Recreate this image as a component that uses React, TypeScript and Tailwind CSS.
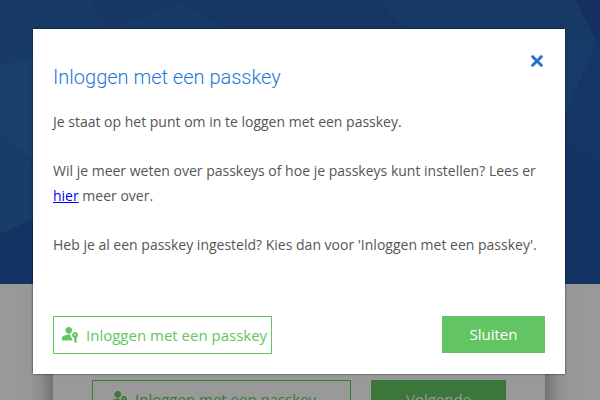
import React from "react";

const PasskeyIcon = () => (
  <svg viewBox="3 4 19 19" className="w-4 h-4 shrink-0" fill="currentColor" aria-hidden="true">
    <path d="M3 20v-2.8q0-.85.438-1.562T4.6 14.55q1.55-.775 3.15-1.162T11 13q.5 0 1 .038t1 .112q-.1 1.45.525 2.738T15.35 18v2H3Zm16 3l-1.5-1.5v-4.65q-1.1-.325-1.8-1.237T15 13.5q0-1.45 1.025-2.475T18.5 10q1.45 0 2.475 1.025T22 13.5q0 1.125-.638 2t-1.612 1.25L21 18l-1.5 1.5L21 21l-2 2Zm-8-11q-1.65 0-2.825-1.175T7 8q0-1.65 1.175-2.825T11 4q1.65 0 2.825 1.175T15 8q0 1.65-1.175 2.825T11 12Zm7.5 2q.425 0 .713-.288T19.5 13q0-.425-.288-.713T18.5 12q-.425 0-.713.288T17.5 13q0 .425.288.713T18.5 14Z" />
  </svg>
);

const CloseIcon = () => (
  <svg viewBox="0 0 12 12" className="w-3 h-3" fill="none" stroke="currentColor" strokeWidth="3" strokeLinecap="round" aria-hidden="true">
    <path d="M1.7 1.7 10.3 10.3M10.3 1.7 1.7 10.3" />
  </svg>
);

/* Faceted blue header artwork */
const HeroPattern = () => (
  <svg viewBox="0 0 600 284" preserveAspectRatio="none" className="w-full h-full" aria-hidden="true">
    <rect width="600" height="284" fill="#173a66" />
    <polygon points="0,66 60,48 33,160 0,135" fill="#193f6b" />
    <polygon points="0,135 33,163 33,219 0,234" fill="#183d69" />
    <polygon points="0,234 33,219 33,284 0,284" fill="#143363" />
    <polygon points="90,0 200,0 108,29" fill="#173762" />
    <polygon points="108,29 183,3 225,29" fill="#173a66" />
    <polygon points="200,0 380,0 405,29 225,29 183,3" fill="#163662" />
    <polygon points="575,0 600,0 600,42 597,42" fill="#143160" />
    <polygon points="565,42 597,42 565,115" fill="#183c69" />
    <polygon points="597,42 600,42 600,163 565,142 565,115" fill="#153564" />
    <polygon points="565,142 600,163 600,284 565,284" fill="#143363" />
  </svg>
);

const LoginPage = () => (
  <div className="min-h-screen bg-[#999999]">
    <div className="h-[284px]">
      <HeroPattern />
    </div>
    <div className="pl-[53px] pr-[55px]">
      <div className="bg-[#999999] px-[39px] pt-24 pb-8 shadow-[0_0_24px_rgba(0,0,0,0.5)] flex gap-5">
        <button className="h-[38px] w-[259px] shrink-0 pl-[18px] border border-[#3b773b] text-[#3b773b] flex items-center gap-2">
          <PasskeyIcon />
          Inloggen met een passkey
        </button>
        <button className="h-[38px] flex-1 bg-[#3b773b] text-[#999999]">Volgende</button>
      </div>
    </div>
  </div>
);

const PasskeyDialog = () => (
  <div className="absolute inset-0 pl-[33px] pr-[35px] pt-[29px]">
    <div
      role="dialog"
      aria-modal="true"
      aria-labelledby="passkey-title"
      className="bg-white px-5 pt-[26px] pb-5 text-[#555555] shadow-[0_0_2px_rgba(0,0,0,0.7)]"
    >
      <div className="flex justify-between items-start">
        <h1 id="passkey-title" className="pt-2 font-['Roboto',sans-serif] font-light text-xl leading-7 text-[#2377d8]">
          Inloggen met een passkey
        </h1>
        <button aria-label="Sluit venster" className="px-0.5 text-[#2b6fd3]">
          <CloseIcon />
        </button>
      </div>

      {/* The long lines may run slightly into the right padding */}
      <div className="pt-[18px] -mr-3 flex flex-col gap-6 text-sm leading-[25px]">
        <p>Je staat op het punt om in te loggen met een passkey.</p>
        <p>
          Wil je meer weten over passkeys of hoe je passkeys kunt instellen? Lees er{" "}
          <a href="#" className="text-[#0000ee] underline">
            hier
          </a>{" "}
          meer over.
        </p>
        <p>Heb je al een passkey ingesteld? Kies dan voor &apos;Inloggen met een passkey&apos;.</p>
      </div>

      {/* Actions */}
      <div className="pt-[59px] flex justify-between items-start">
        <button className="h-[38px] pl-2 pr-1 border border-[#62c462] text-[#62c462] flex items-center gap-2">
          <PasskeyIcon />
          Inloggen met een passkey
        </button>
        <button className="h-[37px] w-[103px] bg-[#62c462] text-white">Sluiten</button>
      </div>
    </div>
  </div>
);

const App = () => {
  return (
    <div className="relative h-screen overflow-hidden font-['Open_Sans',sans-serif] text-[15px]">
      <LoginPage />
      <PasskeyDialog />
    </div>
  );
};

export default App;
